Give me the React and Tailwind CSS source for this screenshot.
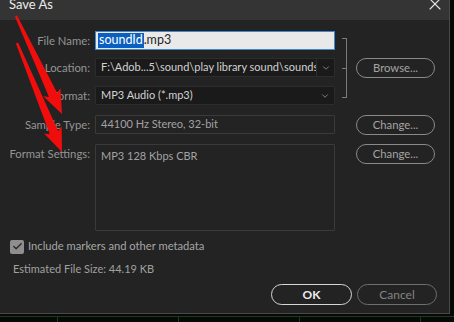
import React from 'react';
import { ChevronDown, X, Check } from 'lucide-react';

// builds a tapered "marker" arrow from tail to tip
const arrowPoints = (tx, ty, px, py) => {
    const dx = px - tx, dy = py - ty, len = Math.hypot(dx, dy);
    const ux = dx / len, uy = dy / len, nx = -uy, ny = ux;
    const h = 21, s = 4.5, w = 9.5, tw = 1.2;
    const bx = px - ux * h, by = py - uy * h;
    const pts = [
        [tx + nx * tw, ty + ny * tw],
        [bx + nx * s, by + ny * s],
        [bx + nx * w - ux * 3, by + ny * w - uy * 3],
        [px, py],
        [bx - nx * w - ux * 3, by - ny * w - uy * 3],
        [bx - nx * s, by - ny * s],
        [tx - nx * tw, ty - ny * tw],
    ];
    return pts.map((p) => p.map((v) => v.toFixed(1)).join(',')).join(' ');
};

const Label = ({ children }) => (
    <div className="w-[90px] shrink-0 text-right text-[#959595] leading-[19px] whitespace-nowrap">{children}</div>
);

const PillButton = ({ children, className = '' }) => (
    <button className={`w-[79px] h-[20px] rounded-full border-[1.5px] flex items-center justify-center leading-none ${className}`}>
        {children}
    </button>
);

const App = () => {
    return (
        <div className="w-[454px] h-[322px] bg-[#070907] relative overflow-hidden select-none text-[11.3px]" style={{ fontFamily: 'Lato, "Liberation Sans", sans-serif' }}>
            <div className="flex">
                {/* Dialog */}
                <div className="w-[450px] h-[314px] bg-[#232323] border-r border-b border-[#4a4a4a] flex flex-col">
                    {/* Title bar */}
                    <div className="h-[20px] bg-[#343434] flex items-start justify-between pl-[9px] pr-[4px]">
                        <span className="text-[#ececec] text-[13px] leading-[13px] -mt-[2px]">Save As</span>
                        <X size={20} strokeWidth={1.3} className="text-[#e8e8e8] -mt-[6px]" />
                    </div>

                    {/* Body */}
                    <div className="flex flex-col pt-[11px]">
                        {/* Name / location / format group */}
                        <div className="flex items-start">
                            <div className="w-[335px] flex flex-col">
                                <div className="flex items-center h-[19px]">
                                    <Label>File Name:</Label>
                                    <div className="ml-[5px] w-[240px] h-[19px] bg-[#e9e9e9] border border-[#3f86d6] flex items-center pl-[2px] text-[12.5px] leading-none">
                                        <span className="bg-[#0b5fc0] text-white px-[1px] py-[1px]">soundId</span>
                                        <span className="text-[#262626]">.mp3</span>
                                    </div>
                                </div>
                                <div className="flex items-center h-[19px] mt-[8px]">
                                    <Label>Location:</Label>
                                    <div className="ml-[5px] w-[240px] h-[19px] bg-[#1a1a1a] border border-[#2c2c2c] flex items-center rounded-[1px]">
                                        <span className="flex-1 pl-[5px] text-[#d2d2d2] whitespace-nowrap overflow-hidden text-[11px]">F:\Adob...5\sound\play library sound\sounds</span>
                                        <div className="w-[18px] h-full border-l border-[#2e2e2e] flex items-center justify-center">
                                            <ChevronDown size={10} strokeWidth={1.8} className="text-[#a0a0a0]" />
                                        </div>
                                    </div>
                                </div>
                                <div className="flex items-center h-[19px] mt-[9px]">
                                    <Label>Format:</Label>
                                    <div className="ml-[5px] w-[240px] h-[19px] bg-[#1a1a1a] border border-[#2c2c2c] flex items-center rounded-[1px]">
                                        <span className="flex-1 pl-[5px] text-[#d2d2d2] text-[11px]">MP3 Audio (*.mp3)</span>
                                        <div className="w-[18px] h-full flex items-center justify-center">
                                            <ChevronDown size={10} strokeWidth={1.8} className="text-[#a0a0a0]" />
                                        </div>
                                    </div>
                                </div>
                            </div>
                            {/* link bracket */}
                            <div className="ml-[7px] mt-[7px] w-[5px] h-[60px] border-t border-b border-r border-[#7a7a7a] flex items-center">
                                <div className="w-[4px] h-[1px] bg-[#7a7a7a]" />
                            </div>
                            <PillButton className="ml-[9px] mt-[27px] border-[#8a8a8a] text-[#a4a4a4]">Browse...</PillButton>
                        </div>

                        {/* Sample type */}
                        <div className="flex items-center h-[19px] mt-[10px]">
                            <Label>Sample Type:</Label>
                            <div className="ml-[5px] w-[240px] h-[19px] border border-[#3a3a3a] rounded-[1px] flex items-center pl-[5px] text-[#a2a2a2] text-[11px]">
                                44100 Hz Stereo, 32-bit
                            </div>
                            <PillButton className="ml-[21px] border-[#8a8a8a] text-[#a4a4a4]">Change...</PillButton>
                        </div>

                        {/* Format settings */}
                        <div className="flex items-start mt-[10px]">
                            <Label>Format Settings:</Label>
                            <div className="ml-[5px] w-[240px] h-[87px] border border-[#3a3a3a] rounded-[1px] pl-[5px] pt-[1px] text-[#a2a2a2] text-[11px] leading-[19px]">
                                MP3 128 Kbps CBR
                            </div>
                            <PillButton className="ml-[21px] border-[#8a8a8a] text-[#a4a4a4]">Change...</PillButton>
                        </div>

                        {/* Metadata checkbox */}
                        <div className="flex items-center mt-[8px] pl-[10px] h-[15px]">
                            <div className="w-[14px] h-[14px] rounded-[2px] bg-[#8e8e8e] flex items-center justify-center">
                                <Check size={11} strokeWidth={3} className="text-[#2a2a2a]" />
                            </div>
                            <span className="ml-[4px] text-[#a6a6a6] text-[11.2px]">Include markers and other metadata</span>
                        </div>

                        <div className="pl-[13px] mt-[7px] text-[#a0a0a0] text-[11px] leading-[15px]">Estimated File Size: 44.19 KB</div>

                        {/* Actions */}
                        <div className="flex justify-end pr-[12px] mt-[8px] gap-[5px]">
                            <button className="w-[81px] h-[21px] rounded-full border-[1.5px] border-[#d6d6d6] text-[#ededed] text-[12px] font-bold leading-none">OK</button>
                            <button className="w-[80px] h-[21px] rounded-full border-[1.5px] border-[#6e6e6e] text-[#838383] text-[12px] leading-none">Cancel</button>
                        </div>
                    </div>
                </div>
            </div>

            {/* background strip below the dialog */}
            <div className="flex h-[8px] pt-[2px]">
                <div className="w-[58px] border-r border-t border-[#1d3a1d]" />
                <div className="w-[121px] border-r border-t border-[#1d3a1d]" />
                <div className="w-[121px] border-r border-t border-[#1d3a1d]" />
                <div className="w-[121px] border-r border-t border-[#1d3a1d]" />
                <div className="flex-1 border-t border-[#1d3a1d]" />
            </div>

            {/* red annotation arrows */}
            <svg className="absolute left-0 top-0 pointer-events-none" width="454" height="322">
                <polygon points={arrowPoints(16, 16, 62, 114)} fill="#f20d0d" />
                <polygon points={arrowPoints(17, 43, 62, 152)} fill="#f20d0d" />
            </svg>
        </div>
    );
};

export default App;
